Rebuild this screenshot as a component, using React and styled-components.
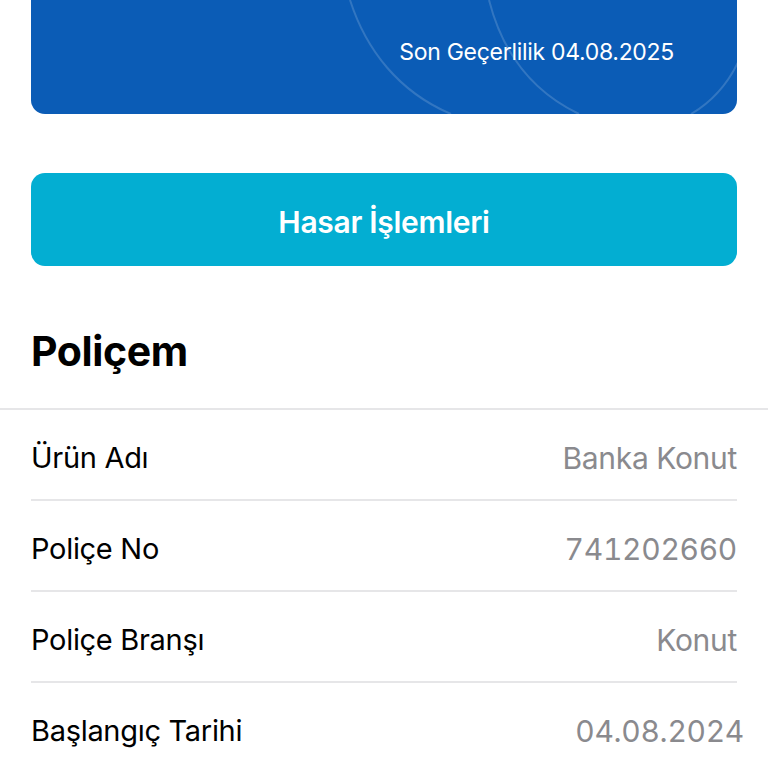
import React from 'react'
import styled, { createGlobalStyle } from 'styled-components'

const GlobalStyle = createGlobalStyle`
  html, body {
    margin: 0;
    padding: 0;
    background: #fff;
  }
  body {
    font-family: Inter, "Liberation Sans", Arial, sans-serif;
    -webkit-font-smoothing: antialiased;
  }
`

const Page = styled.div`
  width: 768px;
  height: 768px;
  overflow: hidden;
  background: #fff;
`

const Padded = styled.div`
  padding: 0 31px;
`

const Card = styled.div`
  position: relative;
  height: 114px;
  border-radius: 0 0 14px 14px;
  background: #0b5cb6;
  overflow: hidden;
  display: flex;
  align-items: flex-start;
  justify-content: flex-end;
  padding: 37px 63px 0 0;
  box-sizing: border-box;
`

const Arcs = styled.svg`
  position: absolute;
  inset: 0;
  width: 100%;
  height: 100%;
  pointer-events: none;
`

const Expiry = styled.div`
  position: relative;
  color: #fff;
  font-size: 23px;
  letter-spacing: -0.3px;
  line-height: 30px;
`

const ClaimButton = styled.button`
  display: flex;
  align-items: center;
  justify-content: center;
  width: 100%;
  height: 93px;
  margin-top: 59px;
  padding: 4px 0 0;
  border: 0;
  border-radius: 14px;
  background: #03aed2;
  color: #fff;
  font-family: inherit;
  font-size: 30px;
  font-weight: 600;
  letter-spacing: -0.3px;
  cursor: pointer;
`

const SectionTitle = styled.h2`
  margin: 0;
  padding: 61px 31px 0;
  height: 144px;
  box-sizing: border-box;
  font-size: 41px;
  font-weight: 700;
  letter-spacing: -0.4px;
  line-height: 48px;
  color: #000;
  border-bottom: 2px solid #e6e6e8;
`

const List = styled.div`
  padding: 0 31px;
`

const Row = styled.div`
  display: flex;
  align-items: center;
  justify-content: space-between;
  height: 91px;
  padding-top: 6px;
  box-sizing: border-box;
  border-bottom: 2px solid ${p => (p.$last ? 'transparent' : '#e6e6e8')};
`

const Label = styled.span`
  font-size: 29px;
  color: #000;
  letter-spacing: -0.3px;
`

const Value = styled.span`
  font-size: 30px;
  color: #8a8a8e;
  letter-spacing: -0.3px;
  font-variant-numeric: tabular-nums;
  margin-right: ${p => (p.$overhang ? '-7px' : '0')};
`

const rows = [
  { label: 'Ürün Adı', value: 'Banka Konut' },
  { label: 'Poliçe No', value: '741202660' },
  { label: 'Poliçe Branşı', value: 'Konut' },
  { label: 'Başlangıç Tarihi', value: '04.08.2024', overhang: true },
]

export default function App() {
  return (
    <Page>
      <GlobalStyle />
      <Padded>
        <Card>
          <Arcs viewBox="0 0 706 114" preserveAspectRatio="none">
            <g fill="none" stroke="rgba(255,255,255,0.16)" strokeWidth="2">
              <path d="M319 0 C335 50 368 92 420 114" />
              <path d="M458 0 C472 55 502 92 548 114" />
              <path d="M708 60 C697 84 682 101 660 114" />
            </g>
          </Arcs>
          <Expiry>Son Geçerlilik 04.08.2025</Expiry>
        </Card>
        <ClaimButton>Hasar İşlemleri</ClaimButton>
      </Padded>
      <SectionTitle>Poliçem</SectionTitle>
      <List>
        {rows.map((r, i) => (
          <Row key={r.label} $last={i === rows.length - 1}>
            <Label>{r.label}</Label>
            <Value $overhang={r.overhang}>{r.value}</Value>
          </Row>
        ))}
      </List>
    </Page>
  )
}
